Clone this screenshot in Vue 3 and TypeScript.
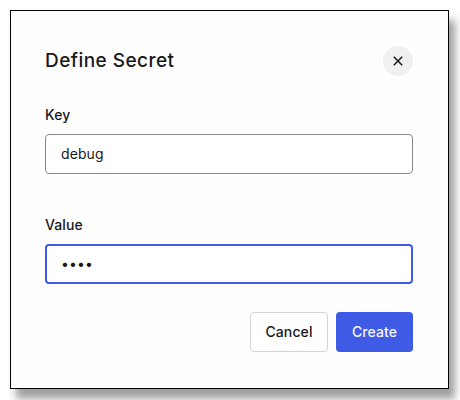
<script setup lang="ts">
import { ref } from 'vue'

const secretKey = ref<string>('debug')
const secretValue = ref<string>('••••')
</script>

<template>
  <main class="page">
    <form class="dialog" @submit.prevent>
      <header class="header">
        <h1 class="title">Define Secret</h1>
        <button class="close" type="button" aria-label="Close">
          <svg width="10" height="10" viewBox="0 0 10 10" fill="none" stroke="#17171a" stroke-width="1.5">
            <path d="M0.8 0.8 9.2 9.2M9.2 0.8 0.8 9.2" />
          </svg>
        </button>
      </header>
      <label class="field">
        <span class="label">Key</span>
        <input v-model="secretKey" class="input" type="text" />
      </label>
      <label class="field">
        <span class="label">Value</span>
        <input v-model="secretValue" class="input active" type="text" autocomplete="off" />
      </label>
      <footer class="actions">
        <button class="button cancel" type="button">Cancel</button>
        <button class="button create" type="submit">Create</button>
      </footer>
    </form>
  </main>
</template>

<style>
body {
  background: #fff;
  overflow: hidden;
}
</style>

<style scoped>
.page {
  box-sizing: border-box;
  height: 400px;
  padding: 10px;
  overflow: hidden;
  font-family: Inter, "Liberation Sans", sans-serif;
  color: #18181b;
}
.dialog {
  box-sizing: border-box;
  width: 439px;
  height: 379px;
  padding: 35px 35px 0 34px;
  border: 1px solid #000;
  background: #fefefe;
  box-shadow: 6px 10px 8px #a0a0a0;
}
.header {
  display: flex;
  align-items: center;
  justify-content: space-between;
  height: 30px;
}
.title {
  margin: 0;
  padding-bottom: 1px;
  font-size: 19px;
  font-weight: 500;
  line-height: 28px;
  letter-spacing: 0.45px;
}
.close {
  display: flex;
  align-items: center;
  justify-content: center;
  width: 30px;
  height: 30px;
  padding: 0;
  border: 0;
  border-radius: 50%;
  background: #f0f0f0;
}
.field {
  display: block;
  margin-top: 28px;
}
.field + .field {
  margin-top: 40px;
}
.label {
  display: block;
  height: 30px;
  font-size: 14px;
  font-weight: 450;
  line-height: 22px;
  letter-spacing: 0.08px;
}
.input {
  display: block;
  box-sizing: border-box;
  width: 100%;
  height: 40px;
  padding: 0 15px 2px;
  border: 1px solid #89898c;
  border-radius: 4px;
  outline: none;
  background: #fff;
  color: #18181b;
  font: 400 14px Inter, "Liberation Sans", sans-serif;
  letter-spacing: 0.1px;
}
.input.active {
  padding: 0 14px 2px;
  border: 2px solid #3f5be5;
}
.actions {
  display: flex;
  justify-content: flex-end;
  gap: 8px;
  margin-top: 28px;
}
.button {
  box-sizing: border-box;
  height: 40px;
  padding: 0 0 2px;
  border-radius: 4px;
  font: 450 14px Inter, "Liberation Sans", sans-serif;
  letter-spacing: 0.1px;
}
.cancel {
  width: 78px;
  border: 1px solid #d5d5d7;
  background: #fff;
  color: #18181b;
}
.create {
  width: 77px;
  border: 0;
  background: #3f5be5;
  color: #f4f6ff;
}
</style>
